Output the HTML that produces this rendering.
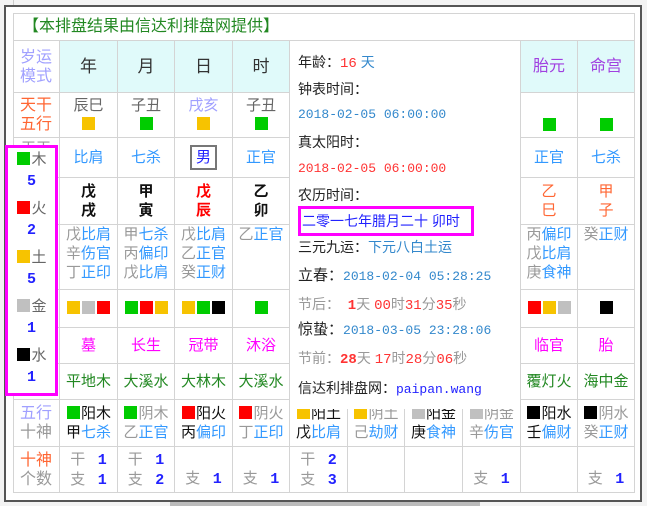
<!DOCTYPE html>
<html><head><meta charset="utf-8"><style>
*{margin:0;padding:0;box-sizing:border-box}
body{width:647px;height:506px;background:#fff;position:relative;overflow:hidden;font-family:"Liberation Sans","Noto Sans CJK SC","WenQuanYi Zen Hei",sans-serif;font-size:15px;color:#333}
.a{position:absolute}
.c{position:absolute;border-right:1px solid #d4d4d4;border-bottom:1px solid #d4d4d4;text-align:center;display:flex;flex-direction:column;align-items:center;justify-content:center;line-height:19px}
.sq{display:inline-block;width:13px;height:13px;vertical-align:-1px;margin:0 1px}
.g{color:#999}.b{color:#3399ff}.k{color:#111}
.G{background:#00cc00}.Y{background:#f7c300}.R{background:#ff0000}.S{background:#c0c0c0}.K{background:#000}
.mono{font-family:"Liberation Mono",monospace}
.n{color:#22f;font-weight:bold;font-family:"Liberation Mono",monospace}
</style></head><body>
<div class="a" style="left:0;top:0;width:647px;height:506px;background:#f3f3f3"></div>
<div class="a" style="left:13px;top:0;width:1px;height:6px;background:#ccc"></div>
<div class="a" style="left:4px;top:5px;width:638px;height:497px;border:2px solid #555;background:#fff"></div>
<div class="a" style="left:170px;top:502px;width:310px;height:4px;background:#bbb"></div>
<div class="a" style="left:13px;top:13px;width:622px;height:480px;border:1px solid #d4d4d4;border-right:none;border-bottom:none"></div>
<div class="c" style="left:13px;top:13px;width:622px;height:28px;align-items:flex-start;padding-left:10px;color:#228822;font-size:16px">【本排盘结果由信达利排盘网提供】</div>
<!-- header row -->
<div class="c" style="left:13px;top:41px;width:47px;height:52px;color:#a0a0ff;font-size:16px">岁运<br>模式</div>
<div class="c" style="left:60px;top:41px;width:58px;height:52px;background:#e0fafa;font-size:17px" >年</div>
<div class="c" style="left:118px;top:41px;width:57px;height:52px;background:#e0fafa;font-size:17px">月</div>
<div class="c" style="left:175px;top:41px;width:58px;height:52px;background:#e0fafa;font-size:17px">日</div>
<div class="c" style="left:233px;top:41px;width:57px;height:52px;background:#e0fafa;font-size:17px">时</div>
<div class="c" style="left:521px;top:41px;width:57px;height:52px;background:#e0fafa;color:#a040e0;font-size:16px">胎元</div>
<div class="c" style="left:578px;top:41px;width:57px;height:52px;background:#e0fafa;color:#a040e0;font-size:16px">命宫</div>
<!-- 天干五行 -->
<div class="c" style="left:13px;top:93px;width:47px;height:45px;color:#ff6633;font-size:16px">天干<br>五行</div>
<div class="c g" style="left:60px;top:93px;width:58px;height:45px;color:#666">辰巳<span><i class="sq Y"></i></span></div>
<div class="c" style="left:118px;top:93px;width:57px;height:45px;color:#666">子丑<span><i class="sq G"></i></span></div>
<div class="c" style="left:175px;top:93px;width:58px;height:45px;color:#a0a0ff">戌亥<span><i class="sq Y"></i></span></div>
<div class="c" style="left:233px;top:93px;width:57px;height:45px;color:#666">子丑<span><i class="sq G"></i></span></div>
<div class="c" style="left:521px;top:93px;width:57px;height:45px;padding-top:18px"><i class="sq G"></i></div>
<div class="c" style="left:578px;top:93px;width:57px;height:45px;padding-top:18px"><i class="sq G"></i></div>
<!-- 十神 -->
<div class="c g" style="left:13px;top:138px;width:47px;height:40px">天干<br>十神</div>
<div class="c b" style="left:60px;top:138px;width:58px;height:40px">比肩</div>
<div class="c b" style="left:118px;top:138px;width:57px;height:40px">七杀</div>
<div class="c" style="left:175px;top:138px;width:58px;height:40px"><span style="border:2px solid #777;padding:1px 4px;color:#22f">男</span></div>
<div class="c b" style="left:233px;top:138px;width:57px;height:40px">正官</div>
<div class="c b" style="left:521px;top:138px;width:57px;height:40px">正官</div>
<div class="c b" style="left:578px;top:138px;width:57px;height:40px">七杀</div>
<!-- 干支 -->
<div class="c" style="left:13px;top:178px;width:47px;height:47px"></div>
<div class="c" style="left:60px;top:178px;width:58px;height:47px;font-weight:bold;color:#111">戊<br>戌</div>
<div class="c" style="left:118px;top:178px;width:57px;height:47px;font-weight:bold;color:#111">甲<br>寅</div>
<div class="c" style="left:175px;top:178px;width:58px;height:47px;font-weight:bold;color:#f00">戊<br>辰</div>
<div class="c" style="left:233px;top:178px;width:57px;height:47px;font-weight:bold;color:#111">乙<br>卯</div>
<div class="c" style="left:521px;top:178px;width:57px;height:47px;color:#ff6633">乙<br>巳</div>
<div class="c" style="left:578px;top:178px;width:57px;height:47px;color:#ff6633">甲<br>子</div>
<!-- 藏干 -->
<div class="c" style="left:13px;top:225px;width:47px;height:65px"></div>
<div class="c" style="left:60px;top:225px;width:58px;height:65px;justify-content:flex-start"><span><span class="g">戊</span><span class="b">比肩</span></span><span><span class="g">辛</span><span class="b">伤官</span></span><span><span class="g">丁</span><span class="b">正印</span></span></div>
<div class="c" style="left:118px;top:225px;width:57px;height:65px;justify-content:flex-start"><span><span class="g">甲</span><span class="b">七杀</span></span><span><span class="g">丙</span><span class="b">偏印</span></span><span><span class="g">戊</span><span class="b">比肩</span></span></div>
<div class="c" style="left:175px;top:225px;width:58px;height:65px;justify-content:flex-start"><span><span class="g">戊</span><span class="b">比肩</span></span><span><span class="g">乙</span><span class="b">正官</span></span><span><span class="g">癸</span><span class="b">正财</span></span></div>
<div class="c" style="left:233px;top:225px;width:57px;height:65px;justify-content:flex-start"><span><span class="g">乙</span><span class="b">正官</span></span></div>
<div class="c" style="left:521px;top:225px;width:57px;height:65px;justify-content:flex-start"><span><span class="g">丙</span><span class="b">偏印</span></span><span><span class="g">戊</span><span class="b">比肩</span></span><span><span class="g">庚</span><span class="b">食神</span></span></div>
<div class="c" style="left:578px;top:225px;width:57px;height:65px;justify-content:flex-start"><span><span class="g">癸</span><span class="b">正财</span></span></div>
<!-- colors -->
<div class="c" style="left:13px;top:290px;width:47px;height:38px"></div>
<div class="c" style="left:60px;top:290px;width:58px;height:38px"><span><i class="sq Y"></i><i class="sq S"></i><i class="sq R"></i></span></div>
<div class="c" style="left:118px;top:290px;width:57px;height:38px"><span><i class="sq G"></i><i class="sq R"></i><i class="sq Y"></i></span></div>
<div class="c" style="left:175px;top:290px;width:58px;height:38px"><span><i class="sq Y"></i><i class="sq G"></i><i class="sq K"></i></span></div>
<div class="c" style="left:233px;top:290px;width:57px;height:38px"><span><i class="sq G"></i></span></div>
<div class="c" style="left:521px;top:290px;width:57px;height:38px"><span><i class="sq R"></i><i class="sq Y"></i><i class="sq S"></i></span></div>
<div class="c" style="left:578px;top:290px;width:57px;height:38px"><span><i class="sq K"></i></span></div>
<!-- 长生 -->
<div class="c" style="left:13px;top:328px;width:47px;height:36px"></div>
<div class="c" style="left:60px;top:328px;width:58px;height:36px;color:#f0f">墓</div>
<div class="c" style="left:118px;top:328px;width:57px;height:36px;color:#f0f">长生</div>
<div class="c" style="left:175px;top:328px;width:58px;height:36px;color:#f0f">冠带</div>
<div class="c" style="left:233px;top:328px;width:57px;height:36px;color:#f0f">沐浴</div>
<div class="c" style="left:521px;top:328px;width:57px;height:36px;color:#f0f">临官</div>
<div class="c" style="left:578px;top:328px;width:57px;height:36px;color:#f0f">胎</div>
<!-- 纳音 -->
<div class="c" style="left:13px;top:364px;width:47px;height:36px"></div>
<div class="c" style="left:60px;top:364px;width:58px;height:36px;color:#228822">平地木</div>
<div class="c" style="left:118px;top:364px;width:57px;height:36px;color:#228822">大溪水</div>
<div class="c" style="left:175px;top:364px;width:58px;height:36px;color:#228822">大林木</div>
<div class="c" style="left:233px;top:364px;width:57px;height:36px;color:#228822">大溪水</div>
<div class="c" style="left:521px;top:364px;width:57px;height:36px;color:#228822">覆灯火</div>
<div class="c" style="left:578px;top:364px;width:57px;height:36px;color:#228822">海中金</div>
<!-- 五行十神 -->
<div class="c" style="left:13px;top:400px;width:47px;height:47px;font-size:16px"><span style="color:#a0a0ff">五行</span><span class="g">十神</span></div>
<div class="c" style="left:60px;top:400px;width:58px;height:47px"><span><i class="sq G"></i><span class="k">阳木</span></span><span><span class="k">甲</span><span class="b">七杀</span></span></div>
<div class="c" style="left:118px;top:400px;width:57px;height:47px"><span><i class="sq G"></i><span class="g">阴木</span></span><span><span class="g">乙</span><span class="b">正官</span></span></div>
<div class="c" style="left:175px;top:400px;width:58px;height:47px"><span><i class="sq R"></i><span class="k">阳火</span></span><span><span class="k">丙</span><span class="b">偏印</span></span></div>
<div class="c" style="left:233px;top:400px;width:57px;height:47px"><span><i class="sq R"></i><span class="g">阴火</span></span><span><span class="g">丁</span><span class="b">正印</span></span></div>
<div class="c" style="left:290px;top:400px;width:58px;height:47px"><span><i class="sq Y"></i><span class="k">阳土</span></span><span><span class="k">戊</span><span class="b">比肩</span></span></div>
<div class="c" style="left:348px;top:400px;width:57px;height:47px"><span><i class="sq Y"></i><span class="g">阴土</span></span><span><span class="g">己</span><span class="b">劫财</span></span></div>
<div class="c" style="left:405px;top:400px;width:58px;height:47px"><span><i class="sq S"></i><span class="k">阳金</span></span><span><span class="k">庚</span><span class="b">食神</span></span></div>
<div class="c" style="left:463px;top:400px;width:58px;height:47px"><span><i class="sq S"></i><span class="g">阴金</span></span><span><span class="g">辛</span><span class="b">伤官</span></span></div>
<div class="c" style="left:521px;top:400px;width:57px;height:47px"><span><i class="sq K"></i><span class="k">阳水</span></span><span><span class="k">壬</span><span class="b">偏财</span></span></div>
<div class="c" style="left:578px;top:400px;width:57px;height:47px"><span><i class="sq K"></i><span class="g">阴水</span></span><span><span class="g">癸</span><span class="b">正财</span></span></div>
<!-- 个数 -->
<div class="c" style="left:13px;top:447px;width:47px;height:46px;font-size:16px"><span style="color:#ff6633">十神</span><span class="g">个数</span></div>
<div class="c" style="left:60px;top:447px;width:58px;height:46px"><span><span class="g">干</span>&nbsp;&nbsp;&nbsp;<span class="n">1</span></span><span><span class="g">支</span>&nbsp;&nbsp;&nbsp;<span class="n">1</span></span></div>
<div class="c" style="left:118px;top:447px;width:57px;height:46px"><span><span class="g">干</span>&nbsp;&nbsp;&nbsp;<span class="n">1</span></span><span><span class="g">支</span>&nbsp;&nbsp;&nbsp;<span class="n">2</span></span></div>
<div class="c" style="left:175px;top:447px;width:58px;height:46px;justify-content:flex-end;padding-bottom:3px"><span><span class="g">支</span>&nbsp;&nbsp;&nbsp;<span class="n">1</span></span></div>
<div class="c" style="left:233px;top:447px;width:57px;height:46px;justify-content:flex-end;padding-bottom:3px"><span><span class="g">支</span>&nbsp;&nbsp;&nbsp;<span class="n">1</span></span></div>
<div class="c" style="left:290px;top:447px;width:58px;height:46px"><span><span class="g">干</span>&nbsp;&nbsp;&nbsp;<span class="n">2</span></span><span><span class="g">支</span>&nbsp;&nbsp;&nbsp;<span class="n">3</span></span></div>
<div class="c" style="left:348px;top:447px;width:57px;height:46px"></div>
<div class="c" style="left:405px;top:447px;width:58px;height:46px"></div>
<div class="c" style="left:463px;top:447px;width:58px;height:46px;justify-content:flex-end;padding-bottom:3px"><span><span class="g">支</span>&nbsp;&nbsp;&nbsp;<span class="n">1</span></span></div>
<div class="c" style="left:521px;top:447px;width:57px;height:46px"></div>
<div class="c" style="left:578px;top:447px;width:57px;height:46px;justify-content:flex-end;padding-bottom:3px"><span><span class="g">支</span>&nbsp;&nbsp;&nbsp;<span class="n">1</span></span></div>
<!-- info panel -->
<div class="a" style="left:290px;top:41px;width:231px;height:368px;background:#fff;border-right:1px solid #d4d4d4"></div>
<div class="a" style="left:298px;top:52px;font-size:14px;line-height:20px;color:#222">
<div style="position:absolute;top:0;white-space:nowrap">年龄：<span style="color:#f33" class="mono">16</span> <span style="color:#3388cc">天</span></div>
<div style="position:absolute;top:27px;white-space:nowrap">钟表时间：</div>
<div class="mono" style="position:absolute;top:53px;white-space:nowrap;color:#3388cc;font-size:13px">2018-02-05 06:00:00</div>
<div style="position:absolute;top:80px;white-space:nowrap">真太阳时：</div>
<div class="mono" style="position:absolute;top:107px;white-space:nowrap;color:#f33;font-size:13px">2018-02-05 06:00:00</div>
<div style="position:absolute;top:133px;white-space:nowrap">农历时间：</div>
<div style="position:absolute;top:154px;left:-0px;width:176px;height:30px;border:3px solid #f0f;white-space:nowrap;color:#22f;padding-left:1px;line-height:24px">二零一七年腊月二十 卯时</div>
<div style="position:absolute;top:185px;white-space:nowrap">三元九运：<span style="color:#3388cc">下元八白土运</span></div>
<div style="position:absolute;top:214px;white-space:nowrap;font-size:15px">立春：<span class="mono" style="color:#3388cc;font-size:13px">2018-02-04 05:28:25</span></div>
<div style="position:absolute;top:242px;white-space:nowrap;color:#999">节后：&nbsp;&nbsp;<span class="mono" style="color:#f33;font-weight:bold">1</span>天 <span class="mono" style="color:#f33">00</span>时<span class="mono" style="color:#f33">31</span>分<span class="mono" style="color:#f33">35</span>秒</div>
<div style="position:absolute;top:268px;white-space:nowrap;font-size:15px">惊蛰：<span class="mono" style="color:#3388cc;font-size:13px">2018-03-05 23:28:06</span></div>
<div style="position:absolute;top:296px;white-space:nowrap;color:#999">节前：<span class="mono" style="color:#f33;font-weight:bold">28</span>天 <span class="mono" style="color:#f33">17</span>时<span class="mono" style="color:#f33">28</span>分<span class="mono" style="color:#f33">06</span>秒</div>
<div style="position:absolute;top:326px;white-space:nowrap">信达利排盘网：<span class="mono" style="color:#22f;font-size:13px">paipan.wang</span></div>
</div>
<!-- magenta box -->
<div class="a" style="left:5px;top:145px;width:53px;height:251px;border:3px solid #f0f;background:#fff"></div>
<div class="a" style="left:8px;top:148px;width:47px;text-align:center;font-size:15px;line-height:22px;color:#666">
<div style="margin-top:1px"><i class="sq G"></i>木</div><div class="n">5</div>
<div style="margin-top:5px"><i class="sq R"></i>火</div><div class="n">2</div>
<div style="margin-top:5px"><i class="sq Y"></i>土</div><div class="n">5</div>
<div style="margin-top:5px"><i class="sq S"></i>金</div><div class="n">1</div>
<div style="margin-top:5px"><i class="sq K"></i>水</div><div class="n">1</div>
</div>
</body></html>
